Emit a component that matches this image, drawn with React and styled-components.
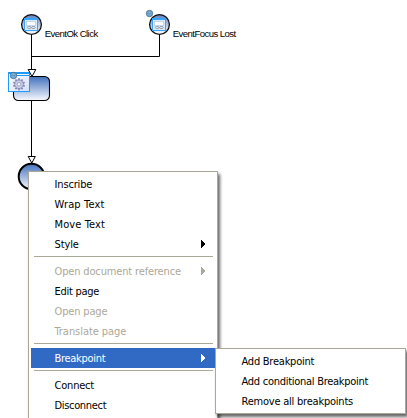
import React from "react";
import styled, { createGlobalStyle } from "styled-components";

const GlobalStyle = createGlobalStyle`
  html, body { margin: 0; background: #fff; overflow: hidden; }
`;

const Canvas = styled.main`
  position: relative;
  width: 407px;
  height: 418px;
  overflow: hidden;
  background: #fff;
`;

const Diagram = styled.svg`
  display: block;
  text {
    font-family: "Liberation Sans", Arial, sans-serif;
    font-size: 9.6px;
    fill: #000;
  }
`;

const Menu = styled.ul`
  position: absolute;
  left: ${(p) => p.$left}px;
  top: ${(p) => p.$top}px;
  box-sizing: border-box;
  width: ${(p) => p.$width}px;
  margin: 0;
  padding: 2px;
  list-style: none;
  background: #fff;
  border: 1px solid #aca899;
  box-shadow: 2px 3px 3px rgba(0, 0, 0, 0.6);
  font: 11px/20px "DejaVu Sans Condensed", "DejaVu Sans", Tahoma, sans-serif;
  font-stretch: condensed;
`;

const Item = styled.li`
  display: flex;
  align-items: center;
  justify-content: space-between;
  height: 20px;
  padding: 0 10px 0 23.5px;
  white-space: nowrap;
  color: ${(p) => (p.$active ? "#fff" : p.$disabled ? "#aca899" : "#000")};
  background: ${(p) => (p.$active ? "#316ac5" : "transparent")};
`;

const Label = styled.span`
  padding-top: 2px;
  letter-spacing: ${(p) => p.$track || 0}px;
`;

const Separator = styled.li`
  height: 1px;
  margin: 2px 2px 4px 3px;
  background: #aca899;
`;

const Arrow = styled.svg`
  display: block;
  fill: currentColor;
`;

const SubmenuArrow = () => (
  <Arrow width="4" height="8" viewBox="0 0 4 8" shapeRendering="crispEdges">
    <path d="M0 0h1v1h1v1h1v1h1v2h-1v1h-1v1h-1v1h-1z" />
  </Arrow>
);

const mainItems = [
  { text: "Inscribe", track: -0.15 },
  { text: "Wrap Text", track: 0.15 },
  { text: "Move Text", track: 0.1 },
  { text: "Style", submenu: true, track: -0.1 },
  null,
  { text: "Open document reference", submenu: true, disabled: true, track: -0.15 },
  { text: "Edit page", track: -0.28 },
  { text: "Open page", disabled: true, track: -0.16 },
  { text: "Translate page", disabled: true, track: -0.06 },
  null,
  { text: "Breakpoint", submenu: true, active: true, track: -0.3 },
  null,
  { text: "Connect", track: -0.2 },
  { text: "Disconnect", track: -0.33 },
  { text: "" },
];

const breakpointItems = [
  { text: "Add Breakpoint", track: -0.24 },
  { text: "Add conditional Breakpoint", track: -0.27 },
  { text: "Remove all breakpoints", track: -0.22 },
];

const ContextMenu = ({ items, left, top, width }) => (
  <Menu $left={left} $top={top} $width={width}>
    {items.map((item, i) =>
      item ? (
        <Item key={i} $active={item.active} $disabled={item.disabled}>
          <Label $track={item.track}>{item.text}</Label>
          {item.submenu && <SubmenuArrow />}
        </Item>
      ) : (
        <Separator key={i} />
      )
    )}
  </Menu>
);

const EventNode = ({ x, y }) => (
  <g transform={`translate(${x} ${y})`}>
    <circle r="9.9" fill="url(#nodeFill)" stroke="#111" strokeWidth="1.3" />
    <rect x="-7" y="-6" width="13" height="12" fill="#dce9fa" stroke="#38a4fa" />
    <path d="M-7 -5.5h13" stroke="#38a4fa" strokeWidth="2" />
    <rect x="-5" y="-3" width="9" height="4" fill="#fff" stroke="#c4d6ee" />
    <rect x="-4" y="2" width="3.5" height="2" rx="1" fill="none" stroke="#8a8f9c" strokeWidth=".8" />
    <rect x=".2" y="2" width="3.5" height="2" rx="1" fill="none" stroke="#8a8f9c" strokeWidth=".8" />
  </g>
);

const Badge = ({ x, y }) => (
  <g transform={`translate(${x} ${y})`}>
    <circle r="3.2" fill="#78acd6" stroke="#44647f" strokeWidth=".8" />
    <path d="M-2 0h4" stroke="#5f98c6" />
  </g>
);

const teeth = Array.from({ length: 10 }, (_, i) => i * 36);

export default function App() {
  return (
    <>
      <GlobalStyle />
      <Canvas>
        <Diagram width="407" height="418">
          <defs>
            <linearGradient id="nodeFill" x1="0" y1="0" x2="0" y2="1">
              <stop offset="0" stopColor="#5c80c2" />
              <stop offset="1" stopColor="#ffffff" />
            </linearGradient>
            <linearGradient id="stepFill" x1="0" y1="0" x2="0" y2="1">
              <stop offset="0" stopColor="#4270bc" />
              <stop offset="1" stopColor="#f8faff" />
            </linearGradient>
            <linearGradient id="gearPanel" x1="0" y1="0" x2="1" y2="1">
              <stop offset="0" stopColor="#ffffff" />
              <stop offset="1" stopColor="#d3defa" />
            </linearGradient>
          </defs>
          <path
            d="M31.5 34v36M159.5 34v22.5H31.5M31.5 101v56"
            fill="none"
            stroke="#000"
          />
          <EventNode x={31.5} y={24.5} />
          <EventNode x={159.5} y={24.5} />
          <Badge x={149.5} y={13.5} />
          <text x="44.7" y="37" textLength="53.5" lengthAdjust="spacing">EventOk Click</text>
          <text x="172.7" y="37" textLength="63.5" lengthAdjust="spacing">EventFocus Lost</text>

          <rect x="13.5" y="76.5" width="36" height="24" rx="5" fill="url(#stepFill)" stroke="#000" strokeWidth="1.1" />
          <rect x="8.5" y="72.5" width="21" height="19" fill="url(#gearPanel)" stroke="#1c9cf8" />
          <path d="M8 73.5h22M16 75.5h14" stroke="#1c9cf8" />
          <path d="M28.2 69.5h7.6L32 76.5z" fill="#fff" stroke="#000" />
          <g transform="translate(19 84.3)">
            {teeth.map((a) => (
              <rect key={a} x="-.9" y="-6" width="1.8" height="3" fill="#8487b2" transform={`rotate(${a})`} />
            ))}
            <circle r="4.3" fill="#c9cce6" stroke="#8b8eb8" strokeWidth=".9" />
            <circle r="1.7" fill="#fff" stroke="#8b8eb8" strokeWidth=".8" />
          </g>
          <Badge x={13.5} y={75.5} />

          <circle cx="31.5" cy="176.5" r="12.8" fill="url(#stepFill)" stroke="#000" strokeWidth="2" />
          <path d="M28.2 156.5h7.1L31.8 163z" fill="#fff" stroke="#000" />
        </Diagram>
        <ContextMenu items={mainItems} left={28} top={171} width={190} />
        <ContextMenu items={breakpointItems} left={215} top={348} width={191} />
      </Canvas>
    </>
  );
}
